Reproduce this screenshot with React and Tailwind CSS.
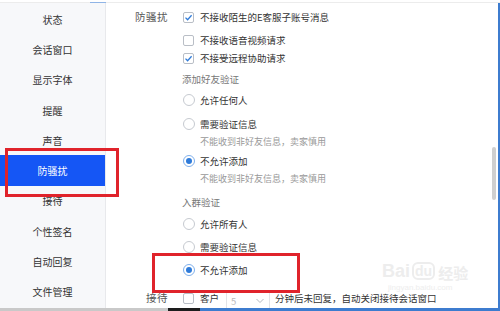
import React from "react";

const menu = ["状态", "会话窗口", "显示字体", "提醒", "声音", "防骚扰", "接待", "个性签名", "自动回复", "文件管理"];

function Check({ on }) {
  return (
    <span className="w-[11px] h-[11px] border border-[#b9bec6] rounded-[2px] bg-white flex items-center justify-center shrink-0">
      {on && (
        <svg width="9" height="9" viewBox="0 0 9 9">
          <path d="M1.5 4.6 L3.6 6.7 L7.6 2.2" fill="none" stroke="#2f7bd9" strokeWidth="1.3" />
        </svg>
      )}
    </span>
  );
}

function Radio({ on }) {
  return (
    <span
      className={
        "w-[12px] h-[12px] rounded-full border bg-white flex items-center justify-center shrink-0 " +
        (on ? "border-[#7fb0ec]" : "border-[#c6cad0]")
      }
    >
      {on && <span className="w-[6px] h-[6px] rounded-full bg-[#2f7bd9]" />}
    </span>
  );
}

function Row({ mt, label, children }) {
  return (
    <div className={"flex items-center h-[18px] " + mt}>
      <div className="w-[65px] text-right pr-[3px] text-[10.5px] text-[#555] tracking-[0.5px]">{label}</div>
      <div className="flex items-center ml-[12px]">{children}</div>
    </div>
  );
}

export default function App() {
  return (
    <div
      className="relative w-[500px] h-[311px] overflow-hidden bg-white flex flex-col text-[9.5px] text-[#333]"
      style={{ fontFamily: '"Noto Sans CJK SC", "Noto Sans", sans-serif' }}
    >
      {/* top edge */}
      <div className="h-[3px] flex shrink-0">
        <div className="w-[90px] border-b border-[#ececec]" />
        <div className="w-[16px] border-b border-[#8fb4e6]" />
        <div className="flex-1 border-b border-[#ececec]" />
      </div>

      <div className="flex flex-1 min-h-0 border-r-[2px] border-[#3d7ccf]">
        {/* sidebar */}
        <div className="w-[106px] bg-[#f7f8fa] border-r border-[#e8e9ec] pt-[1px] flex flex-col">
          {menu.map((m) => (
            <div
              key={m}
              className={
                "h-[30.3px] flex items-center justify-center shrink-0 text-[10px] " +
                (m === "防骚扰" ? "bg-[#1556f5] text-white" : "text-[#333]")
              }
            >
              {m}
            </div>
          ))}
        </div>

        {/* content */}
        <div className="flex-1 flex flex-col">
          <Row mt="mt-[5px]" label="防骚扰">
            <Check on />
            <span className="ml-[6px]">不接收陌生的E客服子账号消息</span>
          </Row>
          <Row mt="mt-[5px]">
            <Check />
            <span className="ml-[6px]">不接收语音视频请求</span>
          </Row>
          <Row mt="mt-0">
            <Check on />
            <span className="ml-[6px]">不接受远程协助请求</span>
          </Row>
          <Row mt="mt-[3px]">
            <span className="text-[9.5px] text-[#777] -ml-[1px]">添加好友验证</span>
          </Row>
          <Row mt="mt-[3px]">
            <Radio />
            <span className="ml-[5px]">允许任何人</span>
          </Row>
          <Row mt="mt-[6px]">
            <Radio />
            <span className="ml-[5px]">需要验证信息</span>
          </Row>
          <Row mt="mt-0">
            <span className="ml-[17px] text-[9px] text-[#999]">不能收到非好友信息，卖家慎用</span>
          </Row>
          <Row mt="mt-[1px]">
            <Radio on />
            <span className="ml-[5px]">不允许添加</span>
          </Row>
          <Row mt="mt-0">
            <span className="ml-[17px] text-[9px] text-[#999]">不能收到非好友信息，卖家慎用</span>
          </Row>
          <Row mt="mt-[5px]">
            <span className="text-[9.5px] text-[#777] -ml-[1px]">入群验证</span>
          </Row>
          <Row mt="mt-[4px]">
            <Radio />
            <span className="ml-[5px]">允许所有人</span>
          </Row>
          <Row mt="mt-[5px]">
            <Radio />
            <span className="ml-[5px]">需要验证信息</span>
          </Row>
          <Row mt="mt-[5px]">
            <Radio on />
            <span className="ml-[5px]">不允许添加</span>
          </Row>
          <Row mt="mt-[10px]" label="接待">
            <Check />
            <span className="ml-[6px]">客户</span>
            <span className="ml-[7px] w-[44px] h-[22px] mt-[8px] border border-[#e2e4e8] flex items-start justify-between px-[4px] pt-[2px] text-[#bbb]">
              <span>5</span>
              <svg width="10" height="10" viewBox="0 0 10 10" className="mt-[2px]">
                <path d="M1.5 3 L5 6.5 L8.5 3" fill="none" stroke="#b5b9c0" strokeWidth="1" />
              </svg>
            </span>
            <span className="ml-[5px]">分钟后未回复，自动关闭接待会话窗口</span>
          </Row>
        </div>

        {/* scrollbar */}
        <div className="w-[6px] relative">
          <div className="absolute left-[0px] top-[144px] w-[4px] h-[53px] rounded-[2px] bg-[#cfcfcf]" />
        </div>
      </div>

      {/* bottom taskbar strip */}
      <div className="h-[3px] flex shrink-0">
        <div className="w-[168px] bg-[#c9c9c9]" />
        <div className="w-[32px] bg-[#1d1d1d]" />
        <div className="flex-1 bg-[#3d7ccf]" />
      </div>

      {/* highlight boxes */}
      <div className="absolute left-[5px] top-[148px] w-[114px] h-[49px] border-[3px] border-[#e0232b]" />
      <div className="absolute left-[152px] top-[253px] w-[148px] h-[40px] border-[3px] border-[#e0232b]" />

      {/* watermark */}
      <div className="absolute left-[382px] top-[262px] flex items-end text-[#ededed] leading-none pointer-events-none">
        <span className="text-[18px] font-bold" style={{ fontFamily: '"Liberation Sans", sans-serif' }}>Bai</span>
        <span className="text-[14px] font-bold ml-[2px] border-2 border-[#ededed] rounded-[6px] px-[1px]" style={{ fontFamily: '"Liberation Sans", sans-serif' }}>du</span>
        <span className="text-[15px] font-bold ml-[3px]">经验</span>
      </div>
      <div className="absolute left-[388px] top-[284px] text-[8px] text-[#eeeeee] leading-none pointer-events-none" style={{ fontFamily: '"Liberation Sans", sans-serif' }}>
        jingyan.baidu.com
      </div>
    </div>
  );
}
